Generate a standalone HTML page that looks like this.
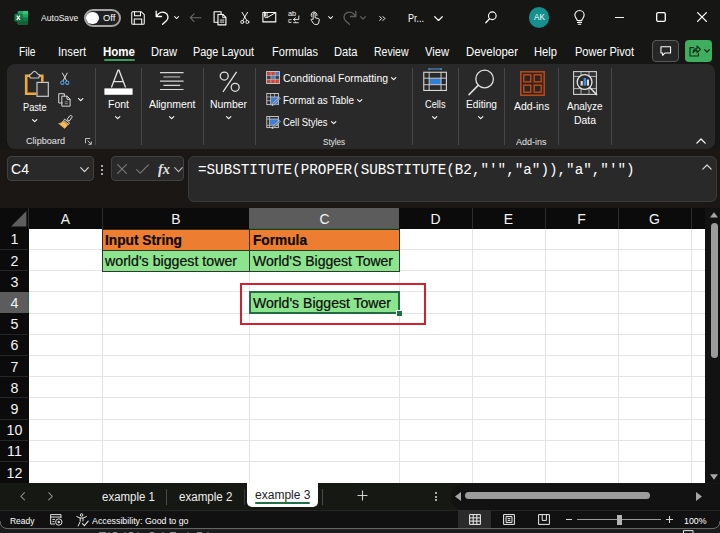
<!DOCTYPE html>
<html><head>
<meta charset="utf-8">
<title>Excel</title>
<style>
*{box-sizing:border-box;margin:0;padding:0}
html,body{width:720px;height:533px;overflow:hidden;background:#161715}
body{position:relative;font-family:"Liberation Sans",sans-serif;color:#fff;font-size:11px}
.abs{position:absolute}
.t{position:absolute;white-space:nowrap;line-height:1;display:block}
svg{position:absolute;overflow:visible}
.ic{fill:none;stroke:#fff;stroke-width:1.1;stroke-linecap:round;stroke-linejoin:round}
/* title bar */
#title{left:0;top:0;width:720px;height:38px;background:#161715}
/* tabs */
.tab{font-size:12px;top:46px;color:#fff}
/* ribbon */
#ribbon{left:7px;top:64px;width:708px;height:85px;background:#292929;border-radius:8px}
.sep{position:absolute;top:68px;width:1px;height:77px;background:#474747}
.rl{font-size:10.8px;color:#fff}
.gl{font-size:9.8px;color:#e8e8e8}
/* formula bar */
#namebox{left:7px;top:156px;width:87px;height:25px;background:#292929;border:1px solid #414141;border-radius:4px}
#fxbox{left:111px;top:156px;width:72.6px;height:25px;background:#292929;border:1px solid #414141;border-radius:4px}
#fbox{left:187.5px;top:156px;width:529px;height:46px;background:#292929;border:1px solid #3a3a3a;border-radius:6px}
/* grid */
#grid{left:0;top:208px;width:720px;height:275px;background:#0b0b0b}
#cells{left:28.5px;top:228.5px;width:676.5px;height:254.3px;background:#fff}
.ch{position:absolute;top:208px;height:20px;font-size:15px;color:#f4f4f4;text-align:center;line-height:21px;transform:scaleX(.93)}
.rh{position:absolute;left:0;width:29px;height:21px;font-size:15.5px;color:#f4f4f4;text-align:center;line-height:22.4px;transform:scaleX(.92)}
.vl{position:absolute;top:228.5px;width:1px;height:254.3px;background:#e4e4e4}
.hl{position:absolute;left:29px;width:676px;height:1px;background:#e4e4e4}
.cell{position:absolute;height:21px}
.ct{font-size:14px;color:#0a0a0a;-webkit-text-stroke:0.2px #0a0a0a}
/* bottom */
#sheetbar{left:0;top:482.8px;width:720px;height:27.2px;background:#161813}
#status{left:0;top:510px;width:720px;height:19px;background:#111111;border-top:1px solid #262626}
.st{font-size:9.5px;color:#fff}
</style>
</head>
<body>
<!-- ================= TITLE BAR ================= -->
<div id="title" class="abs"></div>
<!-- excel logo -->
<svg style="left:13.5px;top:10px" width="14.5" height="15.4" viewBox="0 0 16 17">
  <rect x="4" y="1" width="11.5" height="15" rx="1.2" fill="#21a366"></rect>
  <rect x="9.7" y="1" width="5.8" height="3.8" fill="#33c481"></rect>
  <rect x="4" y="4.8" width="5.7" height="3.7" fill="#107c41"></rect>
  <rect x="9.7" y="4.8" width="5.8" height="3.7" fill="#21a366"></rect>
  <rect x="4" y="8.5" width="11.5" height="7.5" rx="1" fill="#185c37"></rect>
  <rect x="9.7" y="8.5" width="5.8" height="3.7" fill="#107c41"></rect>
  <rect x="0.5" y="4.2" width="8.6" height="8.6" rx="1" fill="#107c41"></rect>
  <path d="M3 6.2 L6.6 10.8 M6.6 6.2 L3 10.8" stroke="#fff" stroke-width="1.3" fill="none"></path>
</svg>
<span class="t" style="left: 41px; top: 13.6px; font-size: 9px; color: rgb(242, 242, 242); transform: scaleX(0.9531); transform-origin: 0px 50%;">AutoSave</span>
<!-- toggle -->
<div class="abs" style="left:84px;top:9px;width:37px;height:18px;border:2px solid #a4a4a4;border-radius:9px;background:#202020"></div>
<div class="abs" style="left:86.2px;top:11.6px;width:12.4px;height:12.4px;border-radius:6.2px;background:#fff"></div>
<span class="t" style="left: 103px; top: 13.6px; font-size: 9px; transform: scaleX(1.0385); transform-origin: 0px 50%;">Off</span>
<!-- save -->
<svg style="left:131.3px;top:11px" width="14" height="14" viewBox="0 0 15 15">
  <path class="ic" d="M1.5 0.8 H11 L14.2 4 V13 a1.2 1.2 0 0 1 -1.2 1.2 H2 A1.2 1.2 0 0 1 0.8 13 V2 A1.2 1.2 0 0 1 2 .8 Z"></path>
  <path class="ic" d="M3.8 1 V5 H10.2 V1 M3.5 14 V8.6 H11.5 V14"></path>
</svg>
<!-- undo -->
<svg style="left:155px;top:10px" width="15" height="15" viewBox="0 0 15 15">
  <path class="ic" style="stroke-width:1.3" d="M1.2 1.2 V6.5 H6.5 M1.6 6.2 C3.5 2.6 7 1.3 10 2.6 C13.6 4.2 13.8 8.6 11.4 10.8 L7.6 14.2"></path>
</svg>
<svg style="left:174.3px;top:15.6px" width="5.2" height="3.4" viewBox="0 0 6 4"><path class="ic" style="stroke-width:1.2" d="M.6 .6 L3 3 L5.4 .6"></path></svg>
<!-- back arrow (gray) -->
<svg style="left:188.5px;top:13px" width="13" height="9.4" viewBox="0 0 14 11"><path class="ic" style="stroke:#6c6c6c;stroke-width:1.2" d="M13.4 5.5 H1 M5.4 1 L.8 5.5 L5.4 10"></path></svg>
<!-- copy/paste-doc -->
<svg style="left:212.7px;top:10.7px" width="14.2" height="14.8" viewBox="0 0 15 16">
  <path class="ic" style="stroke-width:1.2" d="M5 12.2 H1 V.8 H8.6 V3.6"></path>
  <path class="ic" style="stroke-width:1.2" d="M5.2 3.8 H10.6 L13.8 7 V15 H5.2 Z"></path>
  <path class="ic" style="stroke-width:1" d="M10.4 4 V7.2 H13.6 M7.6 9.8 H11.6 M7.6 12 H11.6"></path>
</svg>
<!-- scissors -->
<svg style="left:239.6px;top:11px" width="9.6" height="14.2" viewBox="0 0 12 16">
  <path class="ic" style="stroke-width:1.2" d="M2.6 .8 L8.6 11.2 M9.4 .8 L3.4 11.2"></path>
  <circle class="ic" cx="2.8" cy="12.9" r="1.9"></circle><circle class="ic" cx="9.2" cy="12.9" r="1.9"></circle>
</svg>
<!-- mail -->
<svg style="left:262px;top:10.6px" width="14.8" height="11.8" viewBox="0 0 16 13">
  <rect class="ic" x=".8" y="1.6" width="14.2" height="10.4" style="stroke-width:1.2"></rect>
  <path class="ic" style="stroke-width:1.1" d="M5.6 7.2 L14.6 2"></path>
  <path class="ic" style="stroke-width:1" d="M2.6 1 V6 A1.4 1.4 0 0 0 5.4 6 V2.4 A.8 .8 0 0 0 3.8 2.4 V5.6"></path>
</svg>
<!-- ab/ac replace -->
<svg style="left:288.2px;top:10.4px" width="12" height="14.6" viewBox="0 0 14 17">
  <text x="0" y="7" font-family="Liberation Sans" font-size="8.5" fill="#fff">ab</text>
  <text x="0" y="15" font-family="Liberation Sans" font-size="8.5" fill="#fff">c</text>
  <path class="ic" style="stroke-width:1" d="M12.6 7 V11 H6.6 M8.6 9 L6.4 11 L8.6 13.2 M6.6 14.8 H12 "></path>
</svg>
<!-- touch -->
<svg style="left:309px;top:10.6px" width="11.6" height="14.4" viewBox="0 0 14 17">
  <path class="ic" style="stroke-width:1.1" d="M5 9.6 V3.4 A1.2 1.2 0 0 1 7.4 3.4 V8 L11.2 8.8 A1.6 1.6 0 0 1 12.4 10.6 L11.6 14.4 A2 2 0 0 1 9.6 16 H7.4 A2.4 2.4 0 0 1 5.4 14.8 L2.8 11 A1 1 0 0 1 4.4 9.8 Z"></path>
  <path class="ic" style="stroke-width:1.1" d="M3 6.4 A3.6 3.6 0 1 1 9.6 5.4"></path>
</svg>
<svg style="left:328px;top:15.6px" width="5.2" height="3.4" viewBox="0 0 6 4"><path class="ic" style="stroke-width:1.2" d="M.6 .6 L3 3 L5.4 .6"></path></svg>
<!-- redo (gray) -->
<svg style="left:342px;top:10px" width="15" height="15" viewBox="0 0 15 15">
  <path class="ic" style="stroke:#5e5e5e;stroke-width:1.3" d="M13.8 1.2 V6.5 H8.5 M13.4 6.2 C11.5 2.6 8 1.3 5 2.6 C1.4 4.2 1.2 8.6 3.6 10.8 L7.4 14.2"></path>
</svg>
<svg style="left:360px;top:16px" width="6" height="4" viewBox="0 0 6 4"><path class="ic" style="stroke:#5e5e5e;stroke-width:1.2" d="M.6 .6 L3 3 L5.4 .6"></path></svg>
<!-- >> -->
<svg style="left:378.6px;top:16px" width="7" height="5" viewBox="0 0 8 6"><path class="ic" style="stroke-width:1.2" d="M.7 .7 L3 3 L.7 5.3 M4.6 .7 L6.9 3 L4.6 5.3"></path></svg>
<span class="t" style="left: 407.5px; top: 12.8px; font-size: 10.5px; transform: scaleX(0.8562); transform-origin: 0px 50%;">Pr...</span>
<svg style="left:433.8px;top:15.6px" width="9" height="5.4" viewBox="0 0 10 6"><path class="ic" style="stroke-width:1.3" d="M.8 .8 L5 5 L9.2 .8"></path></svg>
<!-- search -->
<svg style="left:485px;top:11.2px" width="12.2" height="13.2" viewBox="0 0 14 15">
  <circle class="ic" cx="8.4" cy="5.4" r="4.4" style="stroke-width:1.3"></circle><path class="ic" style="stroke-width:1.4" d="M5.2 8.8 L.9 13.4"></path>
</svg>
<!-- avatar -->
<div class="abs" style="left:528.7px;top:7.4px;width:20.8px;height:20.4px;border-radius:10.4px;background:#15908d"></div>
<span class="t" style="left: 534px; top: 13.4px; font-size: 9px; transform: scaleX(0.8988); transform-origin: 0px 50%;">AK</span>
<!-- bulb -->
<svg style="left:573.5px;top:10px" width="11" height="15.5" viewBox="0 0 12 17">
  <path class="ic" style="stroke-width:1.2" d="M3.6 11.6 C3.4 9.8 .9 8.6 .9 5.6 A5.1 5.1 0 0 1 11.1 5.6 C11.1 8.6 8.6 9.8 8.4 11.6 Z M3.8 13.6 H8.2 M4.6 15.6 H7.4"></path>
</svg>
<!-- window controls -->
<div class="abs" style="left:615px;top:16.6px;width:9.4px;height:1.1px;background:#f4f4f4"></div>
<svg style="left:656px;top:12px" width="10" height="10" viewBox="0 0 10 10"><rect class="ic" x=".7" y=".7" width="8.6" height="8.6" rx="1.4" style="stroke-width:1.3"></rect></svg>
<svg style="left:697px;top:12px" width="10" height="10" viewBox="0 0 10 10"><path class="ic" style="stroke-width:1.3" d="M.6 .6 L9.4 9.4 M9.4 .6 L.6 9.4"></path></svg>

<!-- ================= TABS ================= -->
<span class="t tab" style="left: 18.5px; transform: scaleX(0.853); transform-origin: 0px 50%;">File</span>
<span class="t tab" style="left: 58px; transform: scaleX(0.9328); transform-origin: 0px 50%;">Insert</span>
<span class="t tab" style="left: 103px; font-weight: 700; transform: scaleX(0.9597); transform-origin: 0px 50%;">Home</span>
<div class="abs" style="left:104px;top:59.2px;width:30.5px;height:1.9px;border-radius:1px;background:#3b9c60"></div>
<span class="t tab" style="left: 150.5px; transform: scaleX(0.9281); transform-origin: 0px 50%;">Draw</span>
<span class="t tab" style="left: 193px; transform: scaleX(0.9052); transform-origin: 0px 50%;">Page Layout</span>
<span class="t tab" style="left: 272px; transform: scaleX(0.9197); transform-origin: 0px 50%;">Formulas</span>
<span class="t tab" style="left: 334px; transform: scaleX(0.9267); transform-origin: 0px 50%;">Data</span>
<span class="t tab" style="left: 373.5px; transform: scaleX(0.8765); transform-origin: 0px 50%;">Review</span>
<span class="t tab" style="left: 425px; transform: scaleX(0.9303); transform-origin: 0px 50%;">View</span>
<span class="t tab" style="left: 465.5px; transform: scaleX(0.9506); transform-origin: 0px 50%;">Developer</span>
<span class="t tab" style="left: 534px; transform: scaleX(0.9316); transform-origin: 0px 50%;">Help</span>
<span class="t tab" style="left: 575px; transform: scaleX(0.9214); transform-origin: 0px 50%;">Power Pivot</span>
<!-- comment button -->
<div class="abs" style="left:652px;top:40px;width:27px;height:22px;border:1px solid #5a5a5a;border-radius:4px;background:#262626"></div>
<svg style="left:659.5px;top:45.5px" width="11.5" height="10.5" viewBox="0 0 13 12"><path class="ic" style="stroke-width:1.2" d="M1 .8 H12 V8 H5.6 L3 10.8 V8 H1 Z"></path></svg>
<!-- share button -->
<div class="abs" style="left:685px;top:40px;width:27px;height:22px;border-radius:4px;background:#3fae5f"></div>
<svg style="left:689px;top:45px" width="12" height="12" viewBox="0 0 12 12"><path class="ic" style="stroke:#0d2a16;stroke-width:1.1" d="M4.6 2.6 H1 V11 H9.4 V8.6 M4 7.6 C4.2 5 5.6 3.6 8 3.6 V1 L11.4 4.4 L8 7.6 V5.4 C6.2 5.4 5 6 4 7.6 Z"></path></svg>
<svg style="left:704px;top:49px" width="6" height="4" viewBox="0 0 6 4"><path class="ic" style="stroke:#0d2a16;stroke-width:1.3" d="M.6 .6 L3 3 L5.4 .6"></path></svg>

<!--RIBBON_START-->
<!-- ================= RIBBON ================= -->
<div id="ribbon" class="abs"></div>
<div class="sep" style="left:95px"></div>
<div class="sep" style="left:141px"></div>
<div class="sep" style="left:203px"></div>
<div class="sep" style="left:255px"></div>
<div class="sep" style="left:412px"></div>
<div class="sep" style="left:458px"></div>
<div class="sep" style="left:504px"></div>
<div class="sep" style="left:558px"></div>
<div class="sep" style="left:611px"></div>
<!-- Paste icon -->
<svg style="left:24px;top:70px" width="26" height="28" viewBox="0 0 26 28">
  <path d="M6 5.8 H2.2 V23.7 H12.4 M15 5.8 H18.3 V11.8" fill="none" stroke="#eea93c" stroke-width="2.6" stroke-linejoin="miter"></path>
  <path d="M5.4 5 C7.6 5 8.4 1.3 10.5 1.3 C12.6 1.3 13.4 5 15.6 5 L14.7 8 H6.3 Z" fill="#262626" stroke="#c8c8c8" stroke-width="1.1" stroke-linejoin="round"></path>
  <rect x="13" y="12.4" width="11.3" height="13.9" fill="#303030" stroke="#cacaca" stroke-width="1.2"></rect>
</svg>
<span class="t rl" style="left: 23px; top: 102px; transform: scaleX(0.8512); transform-origin: 0px 50%;">Paste</span>
<svg style="left:32px;top:119px" width="5.4" height="3.6" viewBox="0 0 6 4"><path class="ic" style="stroke-width:1.2" d="M.6 .6 L3 3 L5.4 .6"></path></svg>
<!-- Cut -->
<svg style="left:59.6px;top:71.6px" width="9.6" height="13.6" viewBox="0 0 11 15">
  <path d="M2.6 .6 L7.6 10 M8.4 .6 L3.4 10" fill="none" stroke="#e6e6e6" stroke-width="1.1"></path>
  <circle cx="2.7" cy="12" r="1.9" fill="none" stroke="#4f9ee3" stroke-width="1.2"></circle><circle cx="8.3" cy="12" r="1.9" fill="none" stroke="#4f9ee3" stroke-width="1.2"></circle>
</svg>
<!-- Copy -->
<svg style="left:57.4px;top:92.6px" width="15.4" height="14" viewBox="0 0 16 16">
  <path class="ic" style="stroke:#e0e0e0;stroke-width:1.1" d="M5 11.4 H1.2 V.8 H7.6 V3.4"></path>
  <path class="ic" style="stroke:#e0e0e0;stroke-width:1.1" d="M5.2 3.6 H10.8 L14.2 7 V15 H5.2 Z M10.6 3.8 V7.2 H14"></path>
  <path d="M8 10 H11.6 M8 12.2 H11.6" stroke="#9a9a9a" stroke-width="1"></path>
</svg>
<svg style="left:78px;top:98px" width="5.4" height="3.6" viewBox="0 0 6 4"><path class="ic" style="stroke-width:1.2" d="M.6 .6 L3 3 L5.4 .6"></path></svg>
<!-- Format painter -->
<svg style="left:57.6px;top:114.6px" width="15" height="14" viewBox="0 0 15 14">
  <path d="M9 4.6 L11.6 1 A1.3 1.3 0 0 1 13.8 2.6 L11.2 6.2 Z" fill="#2a2a2a" stroke="#e6e6e6" stroke-width="1"></path>
  <path d="M6.6 4.2 L11.6 8 L10.6 9.4 L5.6 5.6 Z" fill="#2a2a2a" stroke="#e6e6e6" stroke-width=".9"></path>
  <path d="M5 6 L10 9.8 L6.6 13.4 L.6 8.6 C2.6 8.4 4 7.4 5 6 Z" fill="#eeb04a" stroke="#eea93c" stroke-width=".6"></path>
  <path d="M3 8.8 L7.6 12.2 M4.4 7.6 L9 11" stroke="#f7d48c" stroke-width=".7"></path>
</svg>
<span class="t gl" style="left: 26.3px; top: 136.4px; transform: scaleX(0.93); transform-origin: 0px 50%;">Clipboard</span>
<svg style="left:85px;top:138.4px" width="7" height="7" viewBox="0 0 8 8"><path d="M.6 6 V.6 H6 M3 3 L7 7 M7.2 4 V7.2 H4" fill="none" stroke="#d8d8d8" stroke-width="1"></path></svg>
<!-- Font -->
<svg style="left:104px;top:68.4px" width="29" height="27.4" viewBox="0 0 29 27.4">
  <path d="M7.4 19.4 L14 2.2 H15 L21.6 19.4 M9.8 13.6 H19.2" fill="none" stroke="#e2e2e2" stroke-width="1.3"></path>
  <rect x="0.4" y="20.4" width="28.2" height="6.4" fill="#fff"></rect>
</svg>
<span class="t rl" style="left: 108.2px; top: 99.4px; transform: scaleX(0.9718); transform-origin: 0px 50%;">Font</span>
<svg style="left:115px;top:116px" width="5.4" height="3.6" viewBox="0 0 6 4"><path class="ic" style="stroke-width:1.2" d="M.6 .6 L3 3 L5.4 .6"></path></svg>
<!-- Alignment -->
<svg style="left:160.4px;top:71.8px" width="23.6" height="18.2" viewBox="0 0 23.6 18.2">
  <path d="M0 .7 H23.6 M0 9.1 H23.6 M0 17.5 H23.6 M3.4 13.3 H20.2" stroke="#d6d6d6" stroke-width="1.2"></path>
  <path d="M3.4 4.9 H20.2" stroke="#9a9a9a" stroke-width="1.4"></path>
</svg>
<span class="t rl" style="left: 149px; top: 99.4px; transform: scaleX(0.9684); transform-origin: 0px 50%;">Alignment</span>
<svg style="left:169px;top:116px" width="5.4" height="3.6" viewBox="0 0 6 4"><path class="ic" style="stroke-width:1.2" d="M.6 .6 L3 3 L5.4 .6"></path></svg>
<!-- Number -->
<svg style="left:219px;top:71px" width="21.6" height="21.8" viewBox="0 0 23 24">
  <circle cx="5.4" cy="5.6" r="4.4" fill="none" stroke="#e2e2e2" stroke-width="1.4"></circle>
  <circle cx="17.4" cy="18" r="4.4" fill="none" stroke="#e2e2e2" stroke-width="1.4"></circle>
  <path d="M19 1 L4 23" stroke="#e2e2e2" stroke-width="1.4"></path>
</svg>
<span class="t rl" style="left: 210.4px; top: 99.4px; transform: scaleX(0.9634); transform-origin: 0px 50%;">Number</span>
<svg style="left:226px;top:116px" width="5.4" height="3.6" viewBox="0 0 6 4"><path class="ic" style="stroke-width:1.2" d="M.6 .6 L3 3 L5.4 .6"></path></svg>
<!-- Conditional Formatting -->
<svg style="left:266px;top:71.2px" width="14" height="13" viewBox="0 0 15 14">
  <rect x=".6" y=".6" width="13.8" height="12.8" fill="#3a3a3a" stroke="#d0d0d0" stroke-width="1"></rect>
  <rect x="1.2" y="1.2" width="4" height="3.6" fill="#e0413a"></rect><rect x="5.6" y="1.2" width="4" height="3.6" fill="#e0413a"></rect>
  <rect x="5.6" y="5.2" width="4" height="3.6" fill="#3d7fd6"></rect><rect x="10" y="1.2" width="4" height="3.6" fill="#3d7fd6"></rect>
  <rect x="1.2" y="9.2" width="4" height="3.6" fill="#e0413a"></rect><rect x="5.6" y="9.2" width="4" height="3.6" fill="#e0413a"></rect><rect x="10" y="9.2" width="4" height="3.6" fill="#e0413a"></rect>
  <path d="M5.3 .6 V13.4 M9.8 .6 V13.4 M.6 5 H14.4 M.6 9 H14.4" stroke="#d0d0d0" stroke-width=".7"></path>
</svg>
<span class="t rl" style="left: 283px; top: 73px; transform: scaleX(0.9666); transform-origin: 0px 50%;">Conditional Formatting</span>
<svg style="left:391px;top:77px" width="5.4" height="3.6" viewBox="0 0 6 4"><path class="ic" style="stroke-width:1.2" d="M.6 .6 L3 3 L5.4 .6"></path></svg>
<!-- Format as Table -->
<svg style="left:266px;top:93.4px" width="14.8" height="13.4" viewBox="0 0 16 15">
  <rect x=".6" y=".6" width="13" height="12.4" fill="#2d2d2d" stroke="#d0d0d0" stroke-width="1"></rect>
  <rect x="5" y="4.4" width="8.4" height="8.4" fill="#3d7fd6"></rect>
  <path d="M4.8 .6 V13 M9.2 .6 V4.4 M.6 4.4 H13.6 M.6 8.6 H5" stroke="#d0d0d0" stroke-width=".8"></path>
  <path d="M14.6 5 L15.6 6 L8.4 13.2 L6.4 14 L7.2 12 Z" fill="#2d2d2d" stroke="#f0f0f0" stroke-width=".9"></path>
</svg>
<span class="t rl" style="left: 283px; top: 95px; transform: scaleX(0.9195); transform-origin: 0px 50%;">Format as Table</span>
<svg style="left:357px;top:99px" width="5.4" height="3.6" viewBox="0 0 6 4"><path class="ic" style="stroke-width:1.2" d="M.6 .6 L3 3 L5.4 .6"></path></svg>
<!-- Cell Styles -->
<svg style="left:266px;top:115.8px" width="14.8" height="13.4" viewBox="0 0 16 15">
  <rect x=".6" y=".6" width="13" height="12.4" fill="#2d2d2d" stroke="#d0d0d0" stroke-width="1"></rect>
  <rect x="3.8" y="3.4" width="9.6" height="7" fill="#3d7fd6"></rect>
  <path d="M3.6 .6 V13 M.6 3.4 H13.6 M.6 10.4 H13.6" stroke="#d0d0d0" stroke-width=".8"></path>
  <path d="M14.6 5 L15.6 6 L8.4 13.2 L6.4 14 L7.2 12 Z" fill="#2d2d2d" stroke="#f0f0f0" stroke-width=".9"></path>
</svg>
<span class="t rl" style="left: 283px; top: 117px; transform: scaleX(0.8723); transform-origin: 0px 50%;">Cell Styles</span>
<svg style="left:331px;top:121px" width="5.4" height="3.6" viewBox="0 0 6 4"><path class="ic" style="stroke-width:1.2" d="M.6 .6 L3 3 L5.4 .6"></path></svg>
<span class="t gl" style="left: 322.5px; top: 136.6px; transform: scaleX(0.8244); transform-origin: 0px 50%;">Styles</span>
<!-- Cells -->
<svg style="left:423px;top:67.8px" width="24.2" height="23.2" viewBox="0 0 26 25">
  <path d="M6.4 1.2 H19.6 M6.4 0 V2.4 M19.6 0 V2.4" stroke="#4f9ee3" stroke-width="1.1" fill="none"></path>
  <rect x=".8" y="4.6" width="24.4" height="19.6" fill="none" stroke="#d6d6d6" stroke-width="1.2"></rect>
  <rect x="6.8" y="11.2" width="12.4" height="6.6" fill="#2f7fd8"></rect>
  <path d="M6.6 4.6 V24.2 M19.4 4.6 V24.2 M.8 11 H25.2 M.8 18 H25.2" stroke="#d6d6d6" stroke-width="1"></path>
</svg>
<span class="t rl" style="left: 425px; top: 99.4px; transform: scaleX(0.8542); transform-origin: 0px 50%;">Cells</span>
<svg style="left:432px;top:116px" width="5.4" height="3.6" viewBox="0 0 6 4"><path class="ic" style="stroke-width:1.2" d="M.6 .6 L3 3 L5.4 .6"></path></svg>
<!-- Editing -->
<svg style="left:468px;top:69px" width="27" height="27" viewBox="0 0 27 27">
  <circle cx="16.6" cy="10" r="8.8" fill="none" stroke="#dedede" stroke-width="1.3"></circle>
  <path d="M10.2 16.4 L1 25.6" stroke="#dedede" stroke-width="1.5" stroke-linecap="round"></path>
</svg>
<span class="t rl" style="left: 465.5px; top: 99.4px; transform: scaleX(0.9389); transform-origin: 0px 50%;">Editing</span>
<svg style="left:478px;top:116px" width="5.4" height="3.6" viewBox="0 0 6 4"><path class="ic" style="stroke-width:1.2" d="M.6 .6 L3 3 L5.4 .6"></path></svg>
<!-- Add-ins -->
<svg style="left:520px;top:71px" width="25" height="25" viewBox="0 0 25 25">
  <rect x=".8" y=".8" width="23.4" height="23.4" fill="#3a2218" stroke="#b84d1c" stroke-width="1.5"></rect>
  <rect x="3.8" y="3.8" width="7" height="7" fill="#2a2523" stroke="#b84d1c" stroke-width="1.4"></rect>
  <rect x="14.2" y="3.8" width="7" height="7" fill="#2a2523" stroke="#b84d1c" stroke-width="1.4"></rect>
  <rect x="3.8" y="14.2" width="7" height="7" fill="#2a2523" stroke="#b84d1c" stroke-width="1.4"></rect>
  <rect x="14.2" y="14.2" width="7" height="7" fill="#2a2523" stroke="#b84d1c" stroke-width="1.4"></rect>
</svg>
<span class="t rl" style="left: 514px; top: 100.5px; transform: scaleX(0.967); transform-origin: 0px 50%;">Add-ins</span>
<span class="t gl" style="left: 516px; top: 136.6px; transform: scaleX(0.9182); transform-origin: 0px 50%;">Add-ins</span>
<!-- Analyze Data -->
<svg style="left:573px;top:71px" width="25" height="25" viewBox="0 0 25 25">
  <rect x=".6" y=".6" width="22.8" height="22.8" fill="#303030" stroke="#d0d0d0" stroke-width="1.1"></rect>
  <path d="M.6 5.4 H23.4 M.6 17.6 H23.4 M8 17.6 V23.4 M16 17.6 V23.4 M8 .6 V5.4 M16 .6 V5.4" stroke="#bdbdbd" stroke-width=".9"></path>
  <circle cx="11.6" cy="11" r="7.4" fill="#2a2a2a" stroke="#e6e6e6" stroke-width="1.3"></circle>
  <rect x="7.6" y="10" width="2.2" height="4.6" fill="#dcdcdc"></rect><rect x="10.6" y="7" width="2.4" height="7.6" fill="#3d8fe6"></rect><rect x="13.8" y="8.6" width="2.2" height="6" fill="#dcdcdc"></rect>
  <path d="M16.8 16.4 L24 24" stroke="#e6e6e6" stroke-width="1.5"></path>
</svg>
<span class="t rl" style="left: 567px; top: 101px; transform: scaleX(0.924); transform-origin: 0px 50%;">Analyze</span>
<span class="t rl" style="left: 574px; top: 115px; transform: scaleX(0.9644); transform-origin: 0px 50%;">Data</span>
<!-- collapse chevron -->
<svg style="left:696px;top:138px" width="10" height="6" viewBox="0 0 10 6"><path class="ic" style="stroke-width:1.2" d="M.8 5.2 L5 1 L9.2 5.2"></path></svg>
<!--RIBBON_END-->
<!--FORMULA_START-->
<!-- ================= FORMULA BAR ================= -->
<div class="abs" style="left:0;top:149px;width:720px;height:59px;background:#1a1714"></div>
<div id="namebox" class="abs"></div>
<span class="t" style="left: 11.3px; top: 161.8px; font-size: 14.2px; transform: scaleX(0.9922); transform-origin: 0px 50%;">C4</span>
<svg style="left:80px;top:167px" width="9" height="6" viewBox="0 0 9 6"><path class="ic" style="stroke:#d6d6d6;stroke-width:1.2" d="M.7 .7 L4.5 4.6 L8.3 .7"></path></svg>
<div class="abs" style="left:101.2px;top:164.5px;width:2px;height:2px;border-radius:1px;background:#d8d8d8"></div>
<div class="abs" style="left:101.2px;top:168.5px;width:2px;height:2px;border-radius:1px;background:#d8d8d8"></div>
<div class="abs" style="left:101.2px;top:172.5px;width:2px;height:2px;border-radius:1px;background:#d8d8d8"></div>
<div id="fxbox" class="abs"></div>
<svg style="left:117px;top:164px" width="10" height="10" viewBox="0 0 10 10"><path class="ic" style="stroke:#7a7a7a;stroke-width:1.1" d="M.6 .6 L9.4 9.4 M9.4 .6 L.6 9.4"></path></svg>
<svg style="left:136px;top:164px" width="13" height="10" viewBox="0 0 13 10"><path class="ic" style="stroke:#7a7a7a;stroke-width:1.1" d="M.6 5.6 L4.2 9.2 L12.4 .8"></path></svg>
<span class="t" style="left: 157.5px; top: 161px; font-size: 15.5px; font-family: &quot;Liberation Serif&quot;, serif; font-style: italic; font-weight: 700; color: rgb(224, 224, 224); transform: scaleX(0.9287); transform-origin: 0px 50%;">fx</span>
<svg style="left:174px;top:167px" width="9" height="6" viewBox="0 0 9 6"><path class="ic" style="stroke:#bdbdbd;stroke-width:1.1" d="M.7 .7 L4.5 4.6 L8.3 .7"></path></svg>
<div id="fbox" class="abs"></div>
<span class="t" style="left: 198.4px; top: 163px; font-size: 14.5px; font-family: &quot;Liberation Mono&quot;, monospace; transform: scaleX(0.9838); transform-origin: 0px 50%;">=SUBSTITUTE(PROPER(SUBSTITUTE(B2,"'","a")),"a","'")</span>
<svg style="left:702px;top:164px" width="10" height="6" viewBox="0 0 10 6"><path class="ic" style="stroke:#d6d6d6;stroke-width:1.2" d="M.8 5.2 L5 1 L9.2 5.2"></path></svg>
<!--FORMULA_END-->
<!--GRID_START-->
<!-- ================= GRID ================= -->
<div id="grid" class="abs"></div>
<div id="cells" class="abs"></div>
<svg style="left:11px;top:211px" width="16" height="16" viewBox="0 0 13 13"><path d="M12.5 0 V12.5 H0 Z" fill="#5e5e5e"></path></svg>
<div class="abs" style="left:28px;top:208px;width:1px;height:20.5px;background:#2e2e2e"></div>
<div class="abs" style="left:101.5px;top:208px;width:1px;height:20.5px;background:#2e2e2e"></div>
<div class="abs" style="left:471.5px;top:208px;width:1px;height:20.5px;background:#2e2e2e"></div>
<div class="abs" style="left:544.5px;top:208px;width:1px;height:20.5px;background:#2e2e2e"></div>
<div class="abs" style="left:617.5px;top:208px;width:1px;height:20.5px;background:#2e2e2e"></div>
<div class="abs" style="left:690.5px;top:208px;width:1px;height:20.5px;background:#2e2e2e"></div>
<div class="abs" style="left:249px;top:208px;width:150px;height:20.6px;background:#5c5c5c;border-bottom:1px solid #1e7145"></div>
<div class="ch" style="left:29px;width:73px">A</div>
<div class="ch" style="left:102px;width:148px">B</div>
<div class="ch" style="left:250px;width:149px">C</div>
<div class="ch" style="left:399px;width:73px">D</div>
<div class="ch" style="left:472px;width:73px">E</div>
<div class="ch" style="left:545px;width:73px">F</div>
<div class="ch" style="left:618px;width:73px">G</div>
<div class="abs" style="left:0;top:291.9px;width:29px;height:21.2px;background:#5c5c5c;border-right:1px solid #1e7145"></div>
<div class="rh" style="top:228.3px">1</div>
<div class="rh" style="top:249.5px">2</div>
<div class="rh" style="top:270.7px">3</div>
<div class="rh" style="top:291.9px">4</div>
<div class="rh" style="top:313.1px">5</div>
<div class="rh" style="top:334.3px">6</div>
<div class="rh" style="top:355.5px">7</div>
<div class="rh" style="top:376.7px">8</div>
<div class="rh" style="top:397.9px">9</div>
<div class="rh" style="top:419.1px">10</div>
<div class="rh" style="top:440.3px">11</div>
<div class="rh" style="top:461.5px">12</div>
<div class="abs" style="left:0;top:249.0px;width:28px;height:1px;background:#262626"></div>
<div class="abs" style="left:0;top:270.2px;width:28px;height:1px;background:#262626"></div>
<div class="abs" style="left:0;top:333.8px;width:28px;height:1px;background:#262626"></div>
<div class="abs" style="left:0;top:355.0px;width:28px;height:1px;background:#262626"></div>
<div class="abs" style="left:0;top:376.2px;width:28px;height:1px;background:#262626"></div>
<div class="abs" style="left:0;top:397.4px;width:28px;height:1px;background:#262626"></div>
<div class="abs" style="left:0;top:418.6px;width:28px;height:1px;background:#262626"></div>
<div class="abs" style="left:0;top:439.8px;width:28px;height:1px;background:#262626"></div>
<div class="abs" style="left:0;top:461.0px;width:28px;height:1px;background:#262626"></div>
<div class="vl" style="left:101.5px"></div>
<div class="vl" style="left:249px"></div>
<div class="vl" style="left:398.5px"></div>
<div class="vl" style="left:471.5px"></div>
<div class="vl" style="left:544.5px"></div>
<div class="vl" style="left:617.5px"></div>
<div class="vl" style="left:690.5px"></div>
<div class="hl" style="top:249.0px"></div>
<div class="hl" style="top:270.2px"></div>
<div class="hl" style="top:291.4px"></div>
<div class="hl" style="top:312.6px"></div>
<div class="hl" style="top:333.8px"></div>
<div class="hl" style="top:355.0px"></div>
<div class="hl" style="top:376.2px"></div>
<div class="hl" style="top:397.4px"></div>
<div class="hl" style="top:418.6px"></div>
<div class="hl" style="top:439.8px"></div>
<div class="hl" style="top:461.0px"></div>
<div class="cell" style="left:101.5px;top:228.5px;width:148.5px;height:22.0px;background:#ed7d31;border:1px solid #3a2a1c"></div>
<div class="cell" style="left:249px;top:228.5px;width:151px;height:22.0px;background:#ed7d31;border:1px solid #3a2a1c"></div>
<div class="cell" style="left:101.5px;top:249.5px;width:148.5px;height:22.2px;background:#8ce48e;border:1px solid #2c3a2c"></div>
<div class="cell" style="left:249px;top:249.5px;width:151px;height:22.2px;background:#8ce48e;border:1px solid #2c3a2c"></div>
<span class="t ct" style="left: 105px; top: 232.9px; font-weight: 700; transform: scaleX(0.9803); transform-origin: 0px 50%;">Input String</span>
<span class="t ct" style="left: 252.5px; top: 232.9px; font-weight: 700; transform: scaleX(0.9777); transform-origin: 0px 50%;">Formula</span>
<span class="t ct" style="left: 105px; top: 253.9px; transform: scaleX(1.0131); transform-origin: 0px 50%;">world's biggest tower</span>
<span class="t ct" style="left: 252.5px; top: 253.9px; transform: scaleX(1.0008); transform-origin: 0px 50%;">World'S Biggest Tower</span>
<div class="cell" style="left:248.5px;top:290.9px;width:151.5px;height:23.6px;background:#8ce48e;border:2px solid #236b43"></div>
<div class="abs" style="left:396px;top:309.9px;width:6px;height:6px;background:#236b43;border-top:1px solid #fff;border-left:1px solid #fff"></div>
<span class="t ct" style="left: 252.5px; top: 296.3px; transform: scaleX(1.0033); transform-origin: 0px 50%;">World's Biggest Tower</span>
<div class="abs" style="left:240px;top:283px;width:186px;height:41.5px;border:2px solid #d3202f"></div>
<div class="abs" style="left:705px;top:208px;width:15px;height:276px;background:#121212"></div>
<svg style="left:710px;top:212px" width="8" height="5.6" viewBox="0 0 9 6"><path d="M0 6 L4.5 0 L9 6 Z" fill="#a6a6a6"></path></svg>
<div class="abs" style="left:710.5px;top:223px;width:7px;height:135px;border-radius:3.5px;background:#9c9c9c"></div>
<svg style="left:709.7px;top:474px" width="8" height="6" viewBox="0 0 9 6"><path d="M0 0 L4.5 6 L9 0 Z" fill="#a6a6a6"></path></svg>
<!--GRID_END-->
<!--BOTTOM_START-->
<!-- ================= SHEET BAR ================= -->
<div id="sheetbar" class="abs"></div>
<svg style="left:20px;top:491.6px" width="5.2" height="8.6" viewBox="0 0 6 10"><path class="ic" style="stroke:#8f8f8f;stroke-width:1.2" d="M5.2 .8 L1 5 L5.2 9.2"></path></svg>
<svg style="left:48px;top:491.6px" width="5.2" height="8.6" viewBox="0 0 6 10"><path class="ic" style="stroke:#8f8f8f;stroke-width:1.2" d="M.8 .8 L5 5 L.8 9.2"></path></svg>
<span class="t" style="left: 102px; top: 490.5px; font-size: 12.5px; color: rgb(240, 240, 240); transform: scaleX(0.9187); transform-origin: 0px 50%;">example 1</span>
<div class="abs" style="left:166px;top:489px;width:1px;height:16px;background:#4a4a4a"></div>
<span class="t" style="left: 178.5px; top: 490.5px; font-size: 12.5px; color: rgb(240, 240, 240); transform: scaleX(0.9274); transform-origin: 0px 50%;">example 2</span>
<div class="abs" style="left:244px;top:489px;width:1px;height:16px;background:#3a3a3a"></div>
<!-- active tab -->
<div class="abs" style="left:247px;top:483px;width:71px;height:24px;background:#fff;border-radius:0 0 5px 5px"></div>
<span class="t" style="left: 254.5px; top: 488.5px; font-size: 12.5px; color: rgb(34, 34, 34); transform: scaleX(0.9621); transform-origin: 0px 50%;">example 3</span>
<div class="abs" style="left:255px;top:502px;width:55px;height:2px;background:#1e7145;border-radius:1px"></div>
<div class="abs" style="left:322px;top:489px;width:1px;height:16px;background:#4a4a4a"></div>
<svg style="left:357px;top:490px" width="11" height="11" viewBox="0 0 11 11"><path d="M5.5 .5 V10.5 M.5 5.5 H10.5" stroke="#d0d0d0" stroke-width="1.1"></path></svg>
<div class="abs" style="left:435.2px;top:492.1px;width:2px;height:2px;border-radius:1px;background:#dcdcdc"></div>
<div class="abs" style="left:435.2px;top:495.7px;width:2px;height:2px;border-radius:1px;background:#dcdcdc"></div>
<div class="abs" style="left:435.2px;top:499.3px;width:2px;height:2px;border-radius:1px;background:#dcdcdc"></div>
<!-- horizontal scrollbar -->
<div class="abs" style="left:451px;top:484px;width:280px;height:26px;background:#121212;border-radius:12px 0 0 12px"></div>
<svg style="left:455px;top:491.5px" width="6" height="9" viewBox="0 0 6 9"><path d="M6 0 L0 4.5 L6 9 Z" fill="#a6a6a6"></path></svg>
<div class="abs" style="left:465px;top:492px;width:185px;height:7px;border-radius:3.5px;background:#9c9c9c"></div>
<svg style="left:696px;top:491.5px" width="6" height="9" viewBox="0 0 6 9"><path d="M0 0 L6 4.5 L0 9 Z" fill="#a6a6a6"></path></svg>
<!-- ================= STATUS BAR ================= -->
<div id="status" class="abs"></div>
<span class="t st" style="left: 10px; top: 516px; transform: scaleX(0.8919); transform-origin: 0px 50%;">Ready</span>
<svg style="left:50px;top:514px" width="13" height="12" viewBox="0 0 13 12">
  <path d="M.6 .6 H11 V4 M.6 .6 V10 H5 M.6 3 H11 M2.4 5.4 H5 M2.4 7.6 H4.4" fill="none" stroke="#e0e0e0" stroke-width="1"></path>
  <circle cx="8.8" cy="8" r="3.2" fill="none" stroke="#e0e0e0" stroke-width="1"></circle><circle cx="8.8" cy="8" r="1.2" fill="#e0e0e0"></circle>
</svg>
<svg style="left:76px;top:513px" width="13" height="14" viewBox="0 0 13 14">
  <circle cx="5.6" cy="2" r="1.3" fill="none" stroke="#e6e6e6" stroke-width="1"></circle>
  <path d="M.8 3.6 L4 5 H7.2 L10.4 3.6 M4.2 5.2 V8.6 L2.2 13 M7 5.2 V8 " fill="none" stroke="#e6e6e6" stroke-width="1" stroke-linecap="round" stroke-linejoin="round"></path>
  <path d="M6.4 10.6 L8.4 12.6 L12.2 8.2" fill="none" stroke="#e6e6e6" stroke-width="1.1" stroke-linecap="round" stroke-linejoin="round"></path>
</svg>
<span class="t st" style="left: 92px; top: 516px; transform: scaleX(0.9276); transform-origin: 0px 50%;">Accessibility: Good to go</span>
<!-- view buttons -->
<div class="abs" style="left:458px;top:510px;width:33px;height:19px;background:#2b2b2b"></div>
<svg style="left:469px;top:514px" width="12" height="11" viewBox="0 0 12 11"><path d="M.6 .6 H11.4 V10.4 H.6 Z M4.2 .6 V10.4 M7.8 .6 V10.4 M.6 3.9 H11.4 M.6 7.1 H11.4" fill="none" stroke="#f0f0f0" stroke-width="1"></path></svg>
<svg style="left:503px;top:514px" width="12" height="11" viewBox="0 0 12 11"><path d="M.6 .6 H11.4 V10.4 H.6 Z M3 2.6 H9 V8.4 H3 Z M4.6 4.6 H7.4 M4.6 6.4 H7.4" fill="none" stroke="#f0f0f0" stroke-width="1"></path></svg>
<svg style="left:538px;top:514px" width="12" height="11" viewBox="0 0 12 11"><path d="M.6 .6 H11.4 V10.4 H.6 Z M4.2 .6 V6.4 H8.4 V.6" fill="none" stroke="#f0f0f0" stroke-width="1"></path></svg>
<!-- zoom -->
<div class="abs" style="left:566px;top:519px;width:6px;height:1px;background:#d8d8d8"></div>
<div class="abs" style="left:577px;top:519px;width:84px;height:1px;background:#9a9a9a"></div>
<div class="abs" style="left:617px;top:514.5px;width:5px;height:10px;background:#b4b4b4"></div>
<svg style="left:666px;top:516px" width="7" height="7" viewBox="0 0 7 7"><path d="M3.5 0 V7 M0 3.5 H7" stroke="#d8d8d8" stroke-width="1"></path></svg>
<span class="t st" style="left: 684px; top: 516px; transform: scaleX(0.9254); transform-origin: 0px 50%;">100%</span>
<!-- window bottom edge -->
<div class="abs" style="left:0;top:529px;width:720px;height:4px;background:#1b1b1b"></div>
<svg style="left:0;top:520px" width="720" height="13" viewBox="0 0 720 13">
  <path d="M0 13 V0 Q0 8.6 8 8.6 H712 Q720 8.6 720 0 V13 Z" fill="#1b1b1b"></path>
  <path d="M0 1 Q0.4 8.6 8 8.6 H712 Q719.6 8.6 720 1" fill="none" stroke="#6e6e6e" stroke-width="1"></path>
  <path d="M99 12.6 H106 M109 12 V13 M113 12.6 H117 M125 12 V13 M129 12.6 H133 M138 12 V13 M150 12.6 H154 M163 12 V13 M170 12.6 H176 M188 12 V13 M197 12.6 H202 M208 12 V13" stroke="#9a9a9a" stroke-width="1"></path>
  <path d="M683.5 13 V10.6 H693 V13" fill="none" stroke="#e8e8e8" stroke-width="1"></path>
</svg>
<!--BOTTOM_END-->


</body></html>
